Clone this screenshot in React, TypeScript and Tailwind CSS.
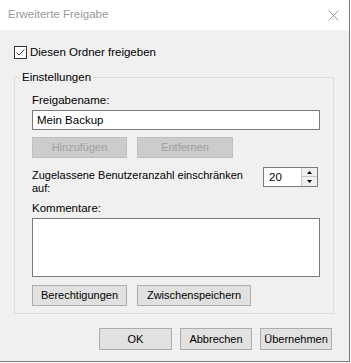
import { useState } from 'react'

const font = { fontFamily: '"Liberation Sans", Arial, sans-serif' }

function WinButton({ label, width, disabled = false }: { label: string; width: string; disabled?: boolean }) {
  return (
    <button
      type="button"
      disabled={disabled}
      className={
        disabled
          ? `${width} h-[21px] border border-[#bfbfbf] bg-[#cccccc] text-[#a0a0a0] text-[11px] leading-none`
          : `${width} h-[21px] border border-[#adadad] bg-[#e1e1e1] text-black text-[11px] leading-none`
      }
    >
      {label}
    </button>
  )
}

export default function App() {
  const [shared, setShared] = useState(true)
  const [users, setUsers] = useState(20)

  return (
    <div
      className="w-[350px] h-[362px] flex flex-col bg-[#f0f0f0] border-r border-b border-[#767676] text-[11px] text-black"
      style={font}
    >
      {/* Title bar */}
      <div className="h-[30px] bg-white flex items-center justify-between pl-[8px] pr-[10px]">
        <span className="text-[11.5px] text-[#999999]">Erweiterte Freigabe</span>
        <svg width="11" height="11" viewBox="0 0 11 11" className="text-[#999999]">
          <path d="M0.5 0.5 L10.5 10.5 M10.5 0.5 L0.5 10.5" stroke="currentColor" strokeWidth="1" />
        </svg>
      </div>

      <div className="flex-1 flex flex-col pl-[14px] pr-[16px]">
        {/* Share checkbox */}
        <label className="mt-[16px] flex items-center gap-[3px] h-[13px]">
          <span
            onClick={() => setShared(!shared)}
            className="w-[13px] h-[13px] border border-[#333333] bg-white flex items-center justify-center"
          >
            {shared && (
              <svg width="11" height="11" viewBox="0 0 11 11">
                <path d="M1.5 5.5 L4 8 L9.5 2.5" fill="none" stroke="#333333" strokeWidth="1" />
              </svg>
            )}
          </span>
          <span className="text-[11.5px]">Diesen Ordner freigeben</span>
        </label>

        {/* Settings group */}
        <fieldset className="mt-[10px] w-[320px] h-[245px] border border-[#dcdcdc] pl-[17px] pr-[13px]">
          <legend className="-ml-[12px] px-[2px] leading-[16px] text-[11.5px]">Einstellungen</legend>

          <div className="mt-[8px] leading-[15px] text-[11.5px]">Freigabename:</div>
          <input
            defaultValue="Mein Backup"
            className="mt-[2px] w-[288px] h-[20px] border border-[#7a7a7a] bg-white px-[4px] text-[11.5px] outline-none"
          />

          <div className="mt-[7px] flex gap-[10px]">
            <WinButton label="Hinzufügen" width="w-[95px]" disabled />
            <WinButton label="Entfernen" width="w-[96px]" disabled />
          </div>

          <div className="mt-[9px] flex justify-between">
            <div className="leading-[13px] pt-[2px]">
              Zugelassene Benutzeranzahl einschränken
              <br />
              auf:
            </div>
            <div className="mr-[2px] w-[55px] h-[20px] border border-[#7a7a7a] bg-white flex">
              <span className="flex-1 pl-[5px] leading-[18px] text-[11.5px]">{users}</span>
              <div className="w-[16px] flex flex-col border-l border-[#c8c8c8] bg-[#f0f0f0]">
                <button
                  type="button"
                  onClick={() => setUsers(users + 1)}
                  className="h-[9px] flex items-center justify-center border-b border-[#c8c8c8]"
                >
                  <svg width="5" height="3" viewBox="0 0 5 3">
                    <path d="M2.5 0 L5 3 L0 3 Z" fill="#000" />
                  </svg>
                </button>
                <button
                  type="button"
                  onClick={() => setUsers(Math.max(0, users - 1))}
                  className="flex-1 flex items-center justify-center"
                >
                  <svg width="5" height="3" viewBox="0 0 5 3">
                    <path d="M0 0 L5 0 L2.5 3 Z" fill="#000" />
                  </svg>
                </button>
              </div>
            </div>
          </div>

          <div className="mt-[6px] leading-[15px] text-[11.5px]">Kommentare:</div>
          <textarea className="mt-[2px] block w-[288px] h-[59px] border border-[#7a7a7a] bg-white resize-none outline-none" />

          <div className="mt-[8px] flex gap-[10px]">
            <WinButton label="Berechtigungen" width="w-[95px]" />
            <WinButton label="Zwischenspeichern" width="w-[114px]" />
          </div>
        </fieldset>

        {/* Dialog buttons */}
        <div className="mt-[14px] flex justify-end gap-[8px] pr-[1px]">
          <WinButton label="OK" width="w-[73px] !h-[22px]" />
          <WinButton label="Abbrechen" width="w-[72px] !h-[22px]" />
          <WinButton label="Übernehmen" width="w-[72px] !h-[22px]" />
        </div>
      </div>
    </div>
  )
}
